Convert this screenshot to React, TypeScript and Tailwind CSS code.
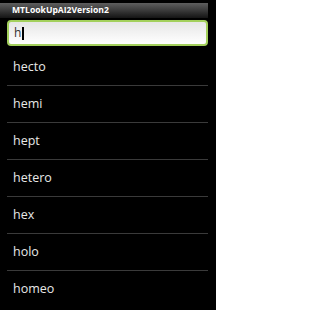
const WORDS = ['hecto', 'hemi', 'hept', 'hetero', 'hex', 'holo', 'homeo'];

export default function App() {
  return (
    <div
      className="w-[216px] h-[310px] overflow-hidden bg-black pr-2 pt-[3px]"
      style={{ fontFamily: '"Open Sans", "Noto Sans", "DejaVu Sans", sans-serif' }}
    >
      {/* title bar */}
      <div className="h-[15px] flex items-center pl-[12px] bg-gradient-to-b from-[#5e5e5e] via-[#3a3a3a] to-[#151515]">
        <span className="text-[8.6px] font-bold leading-none text-white">
          MTLookUpAI2Version2
        </span>
      </div>

      {/* search field */}
      <div className="pl-[7px] pt-[2px]">
        <div className="h-[26px] rounded-[4px] border-2 border-[#a3d05c] bg-gradient-to-b from-[#e6e6e6] to-[#ffffff] flex items-center pl-[5px]">
          <span className="text-[12px] leading-none text-[#333]">h</span>
          <span className="w-[1.5px] h-[13px] bg-black ml-[1px]" />
        </div>
      </div>

      {/* list */}
      <ul className="mt-[3px] pl-[7px]">
        {WORDS.map((w) => (
          <li key={w} className="h-[37px] flex items-center pl-[6px] border-b border-[#3a3a3a] last:border-b-0">
            <span className="text-[12.5px] font-medium leading-none text-[#e8e8e8]">{w}</span>
          </li>
        ))}
      </ul>
    </div>
  );
}
